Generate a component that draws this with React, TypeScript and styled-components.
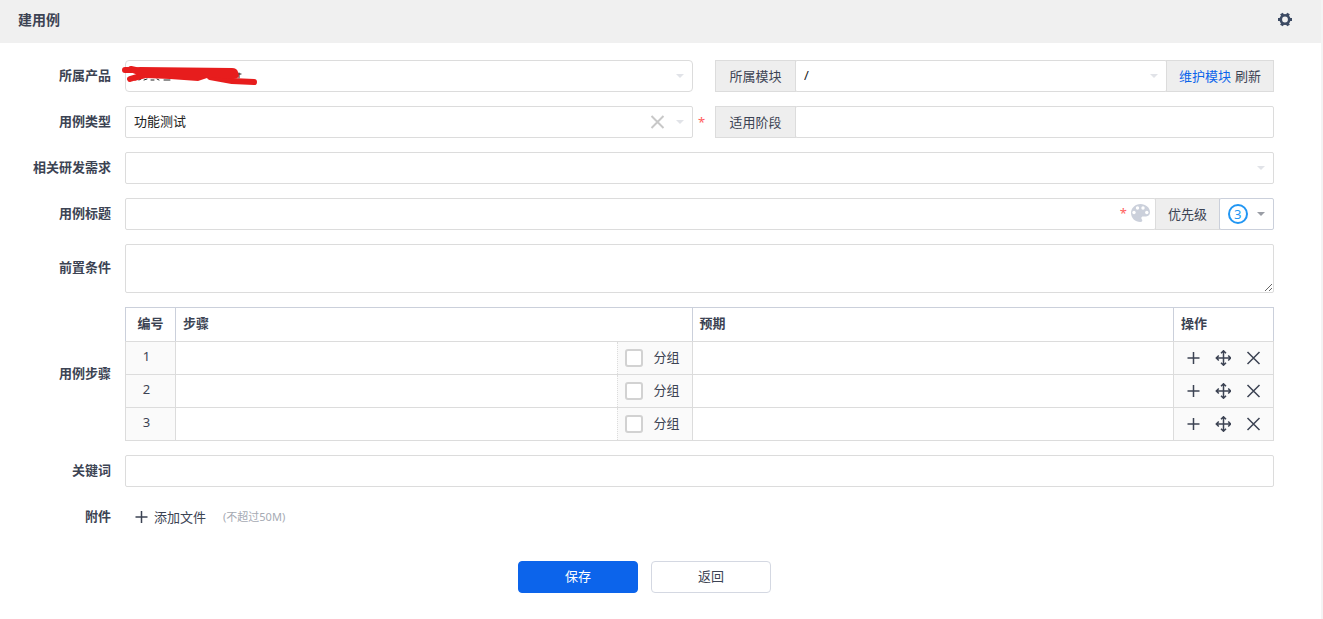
import React from "react";
import styled, { createGlobalStyle, css } from "styled-components";

const GlobalStyle = createGlobalStyle`
  *, *::before, *::after { box-sizing: border-box; }
  body {
    margin: 0;
    background: #fff;
    color: #3c4353;
    font: 13px/20px "Noto Sans", "Noto Sans CJK SC", sans-serif;
  }
  input, select, textarea, button { font: inherit; color: inherit; }
`;

const Page = styled.main`
  min-height: 100vh;
  border-right: 2px solid #f4f4f4;
`;

const Header = styled.header`
  display: flex;
  align-items: center;
  justify-content: space-between;
  height: 43px;
  padding: 0 28px 4px 18px;
  background: #f0f0f0;
`;

const Title = styled.h1`
  margin: 0;
  font-size: 14px;
  line-height: 20px;
  font-weight: 700;
`;

const IconButton = styled.button<{ $size?: number }>`
  display: inline-flex;
  align-items: center;
  justify-content: center;
  width: ${(p) => p.$size ?? 16}px;
  height: ${(p) => p.$size ?? 16}px;
  padding: 0;
  border: 0;
  background: none;
  cursor: pointer;
`;

const Form = styled.form`
  display: flex;
  flex-direction: column;
  gap: 14px;
  padding: 17px 47px 26px 0;
`;

const Row = styled.div`
  display: grid;
  grid-template-columns: 111px minmax(0, 1fr);
  column-gap: 14px;
  align-items: center;
`;

const labelStyle = css`
  padding-bottom: 3px;
  text-align: right;
  font-weight: 700;
`;
const Label = styled.label`
  ${labelStyle}
`;
const LabelText = styled.span`
  ${labelStyle}
`;

const Pair = styled.div`
  display: grid;
  grid-template-columns: minmax(0, 590fr) minmax(0, 559fr);
`;

const WithMark = styled.div`
  display: grid;
  grid-template-columns: minmax(0, 1fr) 22px;
  align-items: center;
`;

const Required = styled.span`
  padding-left: 5px;
  color: #ff5d5d;
  font-size: 13px;
`;

const Group = styled.div`
  display: flex;
  > * + * { margin-left: -1px; }
`;

const Addon = styled.span<{ $wide?: boolean }>`
  display: flex;
  align-items: center;
  justify-content: center;
  gap: 4px;
  flex: none;
  min-width: ${(p) => (p.$wide ? 81 : 0)}px;
  height: 32px;
  padding: 0 12px 1px;
  border: 1px solid #dcdcdc;
  background: #eee;
  a { color: #0c64eb; text-decoration: none; }
`;
const AddonLabel = styled(Addon).attrs({ as: "label" })<{ htmlFor?: string }>``;

const TextLink = styled(IconButton)`
  width: auto;
  height: auto;
`;

const Control = styled.div`
  position: relative;
  flex: 1;
  min-width: 0;
`;

const PriorityControl = styled(Control)`
  flex: 0 0 55px;
`;

const fieldStyle = css`
  display: block;
  width: 100%;
  height: 32px;
  padding: 0 8px 2px;
  border: 1px solid #dcdcdc;
  border-radius: 2px;
  background: #fff;
  outline: none;
  &:focus { border-color: #0c64eb; }
`;
const Input = styled.input`
  ${fieldStyle}
`;
const Select = styled.select<{ $round?: boolean }>`
  ${fieldStyle}
  appearance: none;
  color: #222;
  border-radius: ${(p) => (p.$round ? 4 : 2)}px;
`;
const PrioritySelect = styled(Select)`
  padding: 0 0 0 14px;
  border-color: #cbd0db;
  color: #2196f3;
  background: transparent;
`;
const Textarea = styled.textarea`
  ${fieldStyle}
  height: 49px;
  resize: vertical;
`;

const Trailing = styled.span<{ $right: number }>`
  position: absolute;
  top: 0;
  bottom: 0;
  right: ${(p) => p.$right}px;
  display: flex;
  align-items: center;
  gap: 11px;
  pointer-events: none;
  button { pointer-events: auto; }
`;

const TitleTools = styled(Trailing)`
  gap: 4px;
  padding-bottom: 2px;
`;

const Ring = styled.span`
  position: absolute;
  top: 6px;
  left: 9px;
  width: 20px;
  height: 20px;
  border: 2px solid #2196f3;
  border-radius: 50%;
  pointer-events: none;
`;

const Scribble = styled.svg`
  position: absolute;
  top: 4px;
  left: -5px;
  width: 140px;
  height: 24px;
  pointer-events: none;
`;

const Steps = styled.table`
  width: 100%;
  table-layout: fixed;
  border-collapse: collapse;
  th, td {
    padding: 0;
    border: 1px solid #dcdcdc;
  }
  th {
    height: 34px;
    padding: 0 7px 4px;
    border-color: #cbd0db;
    border-bottom-color: #dcdcdc;
    text-align: left;
    font-weight: 700;
  }
  td { height: 33px; }
  th:first-child { text-align: center; }
`;

const NumberCell = styled.td`
  background: #fafafa;
  text-align: center;
  > span { display: block; padding: 0 8px 4px 0; }
`;

const StepCell = styled.div`
  display: flex;
  height: 32px;
`;

const CellInput = styled.input`
  display: block;
  flex: 1;
  width: 100%;
  min-width: 0;
  height: 32px;
  padding: 0 8px;
  border: 0;
  outline: none;
  background: transparent;
`;

const GroupToggle = styled.label`
  display: flex;
  align-items: center;
  gap: 11px;
  flex: none;
  width: 75px;
  padding-left: 7px;
  border-left: 1px dotted #dcdcdc;
  background: #fafafa;
  > span { padding-bottom: 2px; }
`;

const Checkbox = styled.input`
  appearance: none;
  width: 18px;
  height: 18px;
  margin: 0;
  border: 2px solid #d2d2d2;
  border-radius: 3px;
  background: #fff;
  &:checked { background: #0c64eb; border-color: #0c64eb; }
`;

const ActionCell = styled.td`
  background: #fafafa;
`;
const Actions = styled.div`
  display: flex;
  align-items: center;
  padding-left: 4px;
`;

const Attach = styled.div`
  display: flex;
  align-items: center;
  gap: 17px;
  height: 32px;
  padding-left: 8px;
`;
const AddFile = styled(TextLink)`
  gap: 5px;
`;
const Hint = styled.span`
  color: #a6aab3;
  font-size: 11px;
`;

const Footer = styled.div`
  display: flex;
  justify-content: center;
  gap: 13px;
  padding: 2px 32px 26px 0;
`;

const Button = styled.button<{ $primary?: boolean }>`
  width: 120px;
  height: 32px;
  padding: 0 0 2px;
  border: 1px solid ${(p) => (p.$primary ? "#0c64eb" : "#d4d8e2")};
  border-radius: 4px;
  background: ${(p) => (p.$primary ? "#0c64eb" : "#fff")};
  color: ${(p) => (p.$primary ? "#fff" : "#3c4353")};
  cursor: pointer;
`;

const Caret = ({ color = "#e1e3e8" }: { color?: string }) => (
  <svg width="8" height="4" viewBox="0 0 8 4" aria-hidden="true">
    <path d="M0 0H8L4 4Z" fill={color} />
  </svg>
);

const Stroke = ({ d, size = 16, color = "#3c4353", width = 1.5 }: { d: string; size?: number; color?: string; width?: number }) => (
  <svg width={size} height={size} viewBox="0 0 16 16" fill="none" stroke={color} strokeWidth={width} aria-hidden="true">
    <path d={d} />
  </svg>
);

const PLUS = "M8.5 2V14M2.5 8H14.5";
const MOVE = "M8.5 1V15M1.5 8H15.5M6 3.300L8.500 .8L11 3.300M6 12.700L8.500 15.200L11 12.700M3.800 5.500L1.300 8L3.800 10.500M13.200 5.500L15.700 8L13.200 10.500";
const CROSS = "M2.500 2L14.500 14M14.500 2L2.500 14";

const Gear = () => (
  <svg width="16" height="16" viewBox="0 0 16 16" aria-hidden="true">
    <g stroke="#3c4a63" strokeWidth="3.200" strokeLinecap="butt">
      <path d="M1 7.500H15M4.500 1.500L11.500 13.500M11.500 1.500L4.500 13.500" />
    </g>
    <circle cx="8" cy="7.500" r="4.200" fill="#f0f0f0" stroke="#3c4a63" strokeWidth="2.600" />
  </svg>
);

const Palette = () => (
  <svg width="19" height="18" viewBox="0 0 19 18" aria-hidden="true">
    <path
      fill="#cbd0db"
      d="M9.5 0C4.2 0 0 4 0 9S4.2 18 9.300 18C11 18 11.500 17 11.200 16C10.900 15.200 10.300 14.900 10.300 14C10.300 13 11 12.400 12 12.400H15C17.500 12.400 19 10.700 19 8.300C19 3.600 14.700 0 9.500 0Z"
    />
    <g fill="#fff">
      <circle cx="3" cy="8.500" r="1.700" />
      <circle cx="6.500" cy="4" r="1.700" />
      <circle cx="12" cy="4" r="1.700" />
      <circle cx="15.800" cy="8.500" r="1.700" />
    </g>
  </svg>
);

export default function App() {
  return (
    <>
      <GlobalStyle />
      <Page>
        <Header>
          <Title>建用例</Title>
          <IconButton type="button" aria-label="设置">
            <Gear />
          </IconButton>
        </Header>
        <Form onSubmit={(e: React.FormEvent) => e.preventDefault()}>
          <Row>
            <Label htmlFor="product">所属产品</Label>
            <Pair>
              <WithMark>
                <Control>
                  <Select id="product" $round defaultValue="">
                    <option value="" />
                  </Select>
                  <Trailing $right={9}>
                    <Caret />
                  </Trailing>
                  <Scribble viewBox="0 0 140 24" fill="none" strokeLinecap="round" strokeLinejoin="round" aria-hidden="true">
                    <path d="M19 16L21 15M24 16L27 15M31 16H34M37 15L39 16M44 16H50M119 9V14M118 10H121" stroke="#222" strokeWidth="1" />
                    <path d="M5 6H12M11 5L20 7M20 12L10 15M90 13L112 17L134 18" stroke="#e71d1d" strokeWidth="6" />
                    <path d="M12 4L20 3L112 4Q117 4 118 8L119 12Q118 15 113 15L90 13L78 17L50 15L26 14L14 17L18 11L10 8Z" fill="#e71d1d" />
                  </Scribble>
                </Control>
              </WithMark>
              <Group>
                <AddonLabel htmlFor="module" $wide>所属模块</AddonLabel>
                <Control>
                  <Select id="module" defaultValue="/">
                    <option value="/">/</option>
                  </Select>
                  <Trailing $right={9}>
                    <Caret />
                  </Trailing>
                </Control>
                <Addon>
                  <a href="#module">维护模块</a>
                  <TextLink type="button">刷新</TextLink>
                </Addon>
              </Group>
            </Pair>
          </Row>

          <Row>
            <Label htmlFor="type">用例类型</Label>
            <Pair>
              <WithMark>
                <Control>
                  <Select id="type" defaultValue="feature">
                    <option value="feature">功能测试</option>
                  </Select>
                  <Trailing $right={9}>
                    <IconButton type="button" aria-label="清除">
                      <Stroke d={CROSS} color="#c8c8c8" width={2} />
                    </IconButton>
                    <Caret />
                  </Trailing>
                </Control>
                <Required>*</Required>
              </WithMark>
              <Group>
                <AddonLabel htmlFor="stage" $wide>适用阶段</AddonLabel>
                <Control>
                  <Input id="stage" />
                </Control>
              </Group>
            </Pair>
          </Row>

          <Row>
            <Label htmlFor="story">相关研发需求</Label>
            <Control>
              <Select id="story" defaultValue="">
                <option value="" />
              </Select>
              <Trailing $right={9}>
                <Caret />
              </Trailing>
            </Control>
          </Row>

          <Row>
            <Label htmlFor="title">用例标题</Label>
            <Group>
              <Control>
                <Input id="title" />
                <TitleTools $right={6}>
                  <Required>*</Required>
                  <IconButton type="button" aria-label="颜色" $size={19}>
                    <Palette />
                  </IconButton>
                </TitleTools>
              </Control>
              <AddonLabel htmlFor="pri">优先级</AddonLabel>
              <PriorityControl>
                <PrioritySelect id="pri" defaultValue="3">
                  <option>1</option>
                  <option>2</option>
                  <option>3</option>
                  <option>4</option>
                </PrioritySelect>
                <Ring />
                <Trailing $right={9}>
                  <Caret color="#9a9da5" />
                </Trailing>
              </PriorityControl>
            </Group>
          </Row>

          <Row>
            <Label htmlFor="precondition">前置条件</Label>
            <Textarea id="precondition" />
          </Row>

          <Row>
            <LabelText id="steps-label">用例步骤</LabelText>
            <Steps aria-labelledby="steps-label">
              <colgroup>
                <col width="50" />
                <col width="45%" />
                <col />
                <col width="100" />
              </colgroup>
              <thead>
                <tr>
                  <th>编号</th>
                  <th>步骤</th>
                  <th>预期</th>
                  <th>操作</th>
                </tr>
              </thead>
              <tbody>
                {[1, 2, 3].map((n) => (
                  <tr key={n}>
                    <NumberCell>
                      <span>{n}</span>
                    </NumberCell>
                    <td>
                      <StepCell>
                        <CellInput aria-label={`步骤 ${n}`} />
                        <GroupToggle>
                          <Checkbox type="checkbox" />
                          <span>分组</span>
                        </GroupToggle>
                      </StepCell>
                    </td>
                    <td>
                      <CellInput aria-label={`预期 ${n}`} />
                    </td>
                    <ActionCell>
                      <Actions>
                        <IconButton type="button" aria-label="添加" $size={30}>
                          <Stroke d={PLUS} />
                        </IconButton>
                        <IconButton type="button" aria-label="移动" $size={30}>
                          <Stroke d={MOVE} />
                        </IconButton>
                        <IconButton type="button" aria-label="删除" $size={30}>
                          <Stroke d={CROSS} />
                        </IconButton>
                      </Actions>
                    </ActionCell>
                  </tr>
                ))}
              </tbody>
            </Steps>
          </Row>

          <Row>
            <Label htmlFor="keywords">关键词</Label>
            <Input id="keywords" />
          </Row>

          <Row>
            <LabelText>附件</LabelText>
            <Attach>
              <AddFile type="button">
                <Stroke d={PLUS} />
                添加文件
              </AddFile>
              <Hint>(不超过50M)</Hint>
            </Attach>
          </Row>
        </Form>
        <Footer>
          <Button type="submit" $primary>
            保存
          </Button>
          <Button type="button">返回</Button>
        </Footer>
      </Page>
    </>
  );
}
